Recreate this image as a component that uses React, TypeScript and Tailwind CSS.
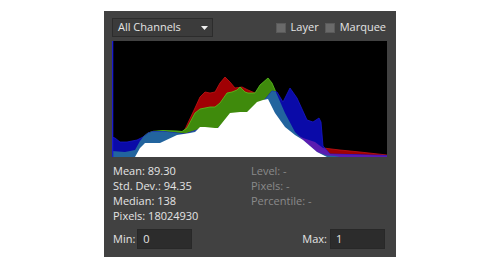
import React from "react";

const RED = "M112,157 L112,156 180,140 187,125 195,108 200,97 205,92 210,93 215,92 220,83 225,77 230,82 235,88 242,87 248,90 255,93 262,100 270,110 280,125 295,134 303,138 315,142 323,148 340,150 360,152 387,155 L387,157 Z";
const GREEN = "M112,157 L112,151 125,152 135,150 140,141 143,137 148,133 153,131.3 163,130.5 177,131 182,131.5 187,128 195,113 200,109 210,107 215,107 220,103 227,93 232,92 237,90 240,87 245,92 248,93 255,93 260,85 268,78 272,83 275,90 285,113 295,132 300,137 303,140 317,152 327,155.5 335,156 340,157 Z";
const BLUE = "M112,157 L112,137 115,138 120,142 127,142 137,140 143,137 148,133 153,131.5 163,131.5 177,133 185,134 200,129 215,131 230,117 250,116 258,107 263,102 267,97 272,91 277,92 283,102 290,88 297,98 307,120 313,122 319,118 321,122 323,146 330,154 387,155.5 L387,157 Z";
const WHITE = "M112,157 L135,157 140,148 145,143 160,143 177,135 190,133 195,132 200,127 205,127 215,128 218,128 230,113 240,112 247,112 257,102 263,100 268,99 275,113 285,127 295,135 303,140 317,152 327,157 L387,157 Z";

function Histogram() {
  return (
    <svg width="275" height="116" viewBox="112 41 275 116" className="block bg-black">
      <defs>
        <clipPath id="clipRed">
          <path d={RED} />
        </clipPath>
        <clipPath id="clipGreen">
          <path d={GREEN} />
        </clipPath>
      </defs>
      <path d={RED} fill="#a00004" stroke="#c41414" strokeWidth="0.8" />
      <path d={GREEN} fill="#3f8a0c" stroke="#58c41c" strokeWidth="0.8" />
      <path d={BLUE} fill="#0a0aa8" stroke="#1818c8" strokeWidth="0.8" />
      <path d={BLUE} fill="#5a1cb0" clipPath="url(#clipRed)" />
      <path d={BLUE} fill="#22649e" clipPath="url(#clipGreen)" />
      <path d={WHITE} fill="#ffffff" />
      <rect x="112" y="41" width="1.3" height="116" fill="#1a1ad0" />
    </svg>
  );
}

function Checkbox({ label }: { label: string }) {
  return (
    <div className="flex items-center gap-[5px]">
      <div className="w-[10px] h-[10px] bg-[#6a6a6a] border border-[#5a5a5a]" />
      <span>{label}</span>
    </div>
  );
}

export default function App() {
  return (
    <div className="min-h-screen bg-white pt-[11px]">
      <div
        className="mx-auto w-[292px] h-[246px] bg-[#414141] pl-[8px] pr-[9px] pt-[7px] flex flex-col text-[11px] text-[#e4e4e4]"
        style={{ fontFamily: '"Open Sans", "Noto Sans", sans-serif' }}
      >
        <div className="flex items-center justify-between h-[19px]">
          <div className="w-[101px] h-[19px] border border-[#2c2c2c] bg-[#3b3b3b] flex items-center justify-between pl-[5px] pr-[4px]">
            <span>All Channels</span>
            <svg width="7" height="4" viewBox="0 0 7 4">
              <path d="M0,0 L7,0 L3.5,4 Z" fill="#f0f0f0" />
            </svg>
          </div>
          <div className="flex items-center gap-[6px] pr-[1px]">
            <Checkbox label="Layer" />
            <Checkbox label="Marquee" />
          </div>
        </div>
        <div className="mt-[4px]">
          <Histogram />
        </div>
        <div className="mt-[6px] grid grid-cols-[138px_1fr] leading-[15px] pl-[1px]">
          <div className="flex flex-col">
            <span>Mean: 89.30</span>
            <span>Std. Dev.: 94.35</span>
            <span>Median: 138</span>
            <span>Pixels: 18024930</span>
          </div>
          <div className="flex flex-col text-[#8a8a8a]">
            <span>Level: -</span>
            <span>Pixels: -</span>
            <span>Percentile: -</span>
          </div>
        </div>
        <div className="mt-[6px] flex items-center justify-between pl-[1px] pr-[2px]">
          <div className="flex items-center gap-[2px]">
            <span>Min:</span>
            <div className="w-[55px] h-[20px] bg-[#2c2c2c] border border-[#282828] flex items-center pl-[5px]">0</div>
          </div>
          <div className="flex items-center gap-[3px]">
            <span>Max:</span>
            <div className="w-[55px] h-[20px] bg-[#2c2c2c] border border-[#282828] flex items-center pl-[5px]">1</div>
          </div>
        </div>
      </div>
    </div>
  );
}
